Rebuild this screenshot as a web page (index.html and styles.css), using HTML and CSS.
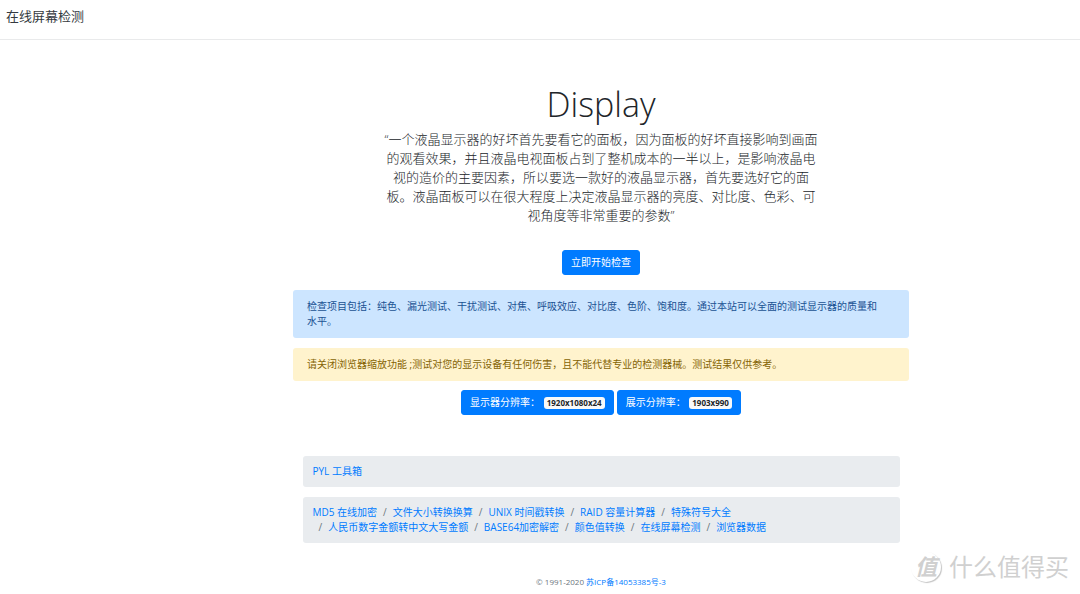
FILE: index.html
```html
<!DOCTYPE html>
<html lang="zh-CN">
<head>
<meta charset="utf-8">
<title>在线屏幕检测</title>
<link rel="stylesheet" href="styles.css">
</head>
<body>
<header class="navbar"><a class="brand" href="#">在线屏幕检测</a></header>
<div class="page">
  <main class="container">
    <section class="hero">
      <h1 class="title">Display</h1>
      <p class="lead">“一个液晶显示器的好坏首先要看它的面板，因为面板的好坏直接影响到画面的观看效果，并且液晶电视面板占到了整机成本的一半以上，是影响液晶电视的造价的主要因素，所以要选一款好的液晶显示器，首先要选好它的面板。液晶面板可以在很大程度上决定液晶显示器的亮度、对比度、色彩、可视角度等非常重要的参数”</p>
      <button class="btn" type="button">立即开始检查</button>
    </section>
    <div class="alert alert-primary">检查项目包括：纯色、漏光测试、干扰测试、对焦、呼吸效应、对比度、色阶、饱和度。通过本站可以全面的测试显示器的质量和<span class="keep">水平。</span></div>
    <div class="alert alert-warning">请关闭浏览器缩放功能 ;测试对您的显示设备有任何伤害，且不能代替专业的检测器械。测试结果仅供参考。</div>
    <div class="actions">
      <button class="btn" type="button">显示器分辨率： <span class="badge">1920x1080x24</span></button>
      <button class="btn" type="button">展示分辨率： <span class="badge">1903x990</span></button>
    </div>
  </main>
  <footer class="footer">
    <nav><ol class="breadcrumb"><li><a href="#">PYL 工具箱</a></li></ol></nav>
    <nav>
      <ol class="breadcrumb breadcrumb-tools">
        <li><a href="#">MD5 在线加密</a></li>
        <li><a href="#">文件大小转换换算</a></li>
        <li><a href="#">UNIX 时间戳转换</a></li>
        <li><a href="#">RAID 容量计算器</a></li>
        <li><a href="#">特殊符号大全</a></li>
        <li><a href="#">人民币数字金额转中文大写金额</a></li>
        <li><a href="#">BASE64加密解密</a></li>
        <li><a href="#">颜色值转换</a></li>
        <li><a href="#">在线屏幕检测</a></li>
        <li><a href="#">浏览器数据</a></li>
      </ol>
    </nav>
    <p class="copyright">© 1991-2020 <a href="#">苏ICP备14053385号-3</a></p>
  </footer>
</div>
<div class="watermark"><span class="seal">值</span><span>什么值得买</span></div>
</body>
</html>
```
FILE: styles.css
```css
* { box-sizing: border-box; }
body {
  position: relative;
  margin: 0;
  min-height: 100vh;
  background: #fff;
  color: #212529;
  font: 10px/15px "Open Sans", "Noto Sans CJK SC", sans-serif;
}
a { color: #007bff; text-decoration: none; }
.navbar {
  padding: 7px 6px 13px;
  border-bottom: 1px solid #e9eaeb;
}
.brand { display: block; color: #343a40; font-size: 13px; line-height: 19px; }
/* The content column sits slightly right of the window centre. */
.page { padding-left: 122px; }
.container { max-width: 616px; margin: 0 auto; }
.hero { padding: 43px 0 15px; text-align: center; }
.title { margin: 0 0 4px; font-size: 34px; font-weight: 300; line-height: 43px; }
.lead {
  max-width: 440px;
  margin: 0 auto 25px;
  font-size: 13px;
  font-weight: 300;
  line-height: 19px;
}
.btn {
  padding: 4px 8px;
  border: 1px solid #007bff;
  border-radius: 3px;
  background: #007bff;
  color: #fff;
  font: inherit;
}
.alert {
  margin-bottom: 10px;
  padding: 9px 14px;
  border-radius: 3px;
}
.alert-primary { background: #cce5ff; color: #1a5293; }
.alert-warning { margin-bottom: 9px; background: #fff3cd; color: #856404; }
.keep { white-space: nowrap; }
.actions { display: flex; justify-content: center; gap: 3px; }
.badge {
  display: inline-block;
  margin-left: 1px;
  padding: 2px 3px;
  border-radius: 3px;
  background: #f8f9fa;
  color: #212529;
  font-size: 8px;
  font-weight: 700;
  line-height: 8px;
}
.footer { max-width: 597px; margin: 0 auto; padding-top: 41px; }
.breadcrumb {
  display: flex;
  flex-wrap: wrap;
  margin: 0 0 10px;
  padding: 8px 10px;
  border-radius: 3px;
  background: #e9ecef;
  list-style: none;
}
.breadcrumb-tools { padding-right: 60px; }
.breadcrumb li + li { padding-left: 6px; }
.breadcrumb li + li::before { content: "/"; padding-right: 6px; color: #6c757d; }
.copyright { margin: 31px 0 0; color: #6c757d; font-size: 8px; line-height: 15px; text-align: center; }
.watermark {
  position: absolute;
  right: 11px;
  bottom: 11px;
  display: flex;
  align-items: center;
  gap: 8px;
  color: #d0d0d0;
  font-size: 24px;
  line-height: 32px;
}
.seal {
  width: 30px;
  height: 30px;
  border-radius: 50%;
  box-shadow: 1px 1px 1px #c4c4c4;
  font-size: 22px;
  font-style: italic;
  font-weight: 700;
  line-height: 28px;
  text-align: center;
}
```
